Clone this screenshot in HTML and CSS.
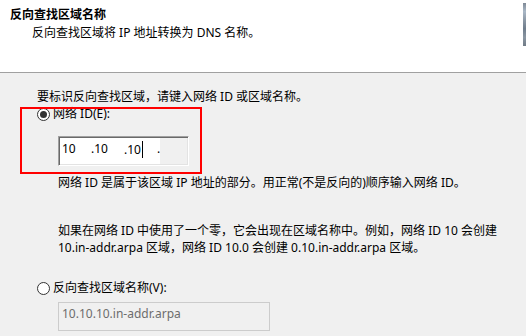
FILE: index.html
```html
<!DOCTYPE html>
<html lang="zh-CN">
<head>
<meta charset="utf-8">
<link rel="stylesheet" href="styles.css">
</head>
<body>
<div class="header">
  <div class="header-text">
    <div class="title">反向查找区域名称</div>
    <div class="subtitle">反向查找区域将 IP 地址转换为 DNS 名称。</div>
  </div>
  <div class="header-icon"></div>
</div>
<div class="main">
  <div class="intro">要标识反向查找区域，请键入网络 ID 或区域名称。</div>
  <div class="option first">
    <span class="radio checked"></span>
    <span class="label">网络 ID(E):</span>
  </div>
  <div class="ipbox">
    <div class="ipfields">
      <span class="oct o1">10</span>
      <span class="oct o2">.10</span>
      <span class="oct o3">.10<span class="caret"></span></span>
      <span class="oct o4">.</span>
    </div>
  </div>
  <div class="desc1">网络 ID 是属于该区域 IP 地址的部分。用正常(不是反向的)顺序输入网络 ID。</div>
  <div class="desc2">如果在网络 ID 中使用了一个零，它会出现在区域名称中。例如，网络 ID 10 会创建<br>10.in-addr.arpa 区域，网络 ID 10.0 会创建 0.10.in-addr.arpa 区域。</div>
  <div class="option second">
    <span class="radio"></span>
    <span class="label">反向查找区域名称(V):</span>
  </div>
  <div class="namebox">10.10.10.in-addr.arpa</div>
  <div class="highlight"></div>
</div>
</body>
</html>
```
FILE: styles.css
```css
html, body {
  margin: 0;
  padding: 0;
}
body {
  width: 526px;
  height: 336px;
  overflow: hidden;
  background: #f0f0f0;
  font-family: "Noto Sans", "Noto Sans CJK SC", sans-serif;
  font-size: 12px;
  line-height: 16px;
  color: #000;
}
.header {
  height: 72px;
  background: #fff;
  border-bottom: 1px solid #a0a0a0;
  display: flex;
  justify-content: space-between;
}
.header-text {
  padding: 7px 0 0 10px;
}
.title {
  font-weight: bold;
}
.subtitle {
  margin: 2px 0 0 22px;
}
.header-icon {
  width: 3px;
  height: 43px;
  margin-top: 3px;
  background: linear-gradient(to bottom, #7f8a96 0%, #a9b7c6 20%, #8c98a5 40%, #6f7d8c 60%, #8a96a2 80%, #707b86 100%);
}
.main {
  position: relative;
  padding: 16px 0 0 37px;
}
.intro {
  height: 16px;
}
.option {
  display: flex;
  align-items: center;
  height: 16px;
}
.option.first {
  margin-top: 1px;
}
.option.second {
  margin-top: 24px;
}
.radio {
  width: 11px;
  height: 11px;
  border: 1px solid #333;
  border-radius: 50%;
  background: #fff;
  position: relative;
  margin-right: 3px;
}
.radio.checked::after {
  content: "";
  position: absolute;
  left: 2px;
  top: 2px;
  width: 7px;
  height: 7px;
  border-radius: 50%;
  background: #333;
}
.ipbox {
  margin: 14px 0 0 21px;
  width: 128px;
  height: 27px;
  border: 1px solid;
  border-color: #a0a0a0 #fff #fff #a0a0a0;
  box-shadow: inset 1px 1px 0 #696969, inset -1px -1px 0 #e3e3e3;
  background: #f0f0f0;
  padding: 1px 0 0 1px;
  box-sizing: content-box;
}
.ipfields {
  width: 100px;
  height: 26px;
  background: #fff;
  display: flex;
  padding-top: 3px;
  box-sizing: border-box;
}
.oct {
  position: relative;
  height: 16px;
}
.o1 { margin-left: 2px; width: 29px; }
.o2 { width: 33px; }
.o3 { width: 33px; }
.o4 { width: 3px; }
.caret {
  display: inline-block;
  width: 1px;
  height: 17px;
  background: #000;
  vertical-align: -4px;
  margin-left: 1px;
}
.desc1 {
  margin: 9px 0 0 21px;
  white-space: nowrap;
}
.desc2 {
  margin: 31px 0 0 21px;
  line-height: 17px;
  white-space: nowrap;
}
.namebox {
  margin: 6px 0 0 21px;
  border: 1px solid #cccccc;
  color: #6d6d6d;
  padding: 3px 0 0 3px;
  box-sizing: border-box;
  height: 29px;
  width: 212px;
}
.highlight {
  position: absolute;
  left: 20px;
  top: 34px;
  width: 178px;
  height: 63px;
  border: 2px solid #ff0000;
}
```
